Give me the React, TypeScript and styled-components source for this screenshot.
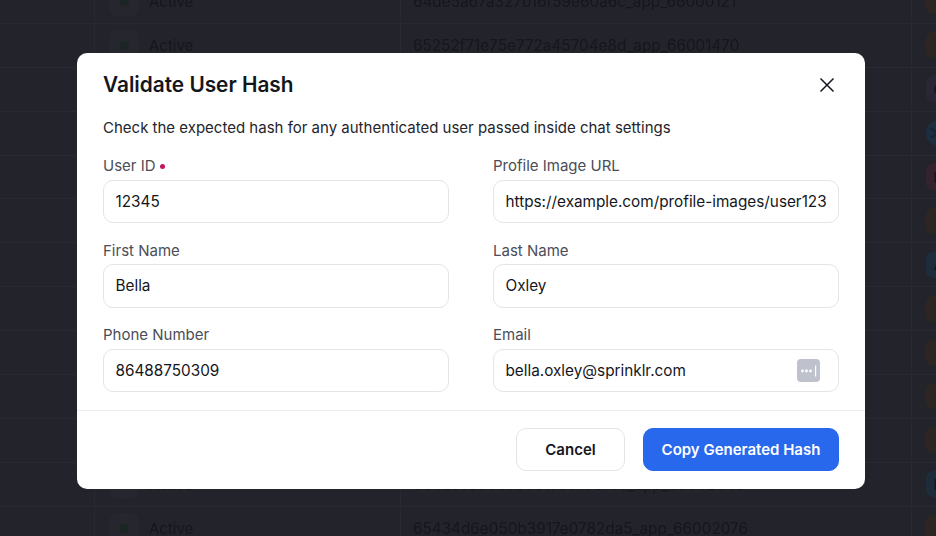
import React from 'react';
import styled, { createGlobalStyle } from 'styled-components';

const GlobalStyle = createGlobalStyle`
  html, body {
    margin: 0;
    padding: 0;
    height: 100%;
    overflow: hidden;
    background: #22232b;
  }
  * {
    box-sizing: border-box;
  }
`;

const Page = styled.div`
  position: relative;
  width: 936px;
  height: 536px;
  overflow: hidden;
  background: #22232b;
  font-family: Inter, 'Liberation Sans', sans-serif;
`;

const Table = styled.div`
  display: flex;
  flex-direction: column;
  margin-top: -20px;
  filter: blur(0.35px);
`;

const Row = styled.div`
  display: grid;
  grid-template-columns: 94px 306px 511px 25px;
  height: 43.9px;
  border-bottom: 1px solid #282931;
`;

const Cell = styled.div`
  display: flex;
  align-items: center;
  gap: 10px;
  padding-left: 14px;
  border-left: 1px solid #282931;
  font-size: 15px;
  color: #16171d;
  white-space: nowrap;
  overflow: hidden;

  &:first-child {
    border-left: none;
  }
`;

const IdCell = styled(Cell)`
  padding-left: 12px;
  font-size: 15.3px;
`;

const StatusChip = styled.span`
  display: flex;
  align-items: center;
  justify-content: center;
  width: 30px;
  height: 30px;
  border-radius: 8px;
  background: #25262e;
`;

const StatusDot = styled.span`
  width: 9px;
  height: 9px;
  border-radius: 50%;
  background: #1b2524;
`;

const AppIcon = styled.span<{ $tone: string; $round?: boolean }>`
  display: flex;
  align-items: center;
  justify-content: center;
  flex: none;
  width: 26px;
  height: 26px;
  overflow: hidden;
  border-radius: ${(p) => (p.$round ? '50%' : '7px')};
  font-size: 15px;
  font-weight: 700;
  color: #17181f;
  background: ${(p) => p.$tone};
`;

const Overlay = styled.div`
  position: absolute;
  left: 77px;
  top: 53px;
  width: 788px;
  height: 436px;
`;

const Modal = styled.section`
  display: flex;
  flex-direction: column;
  width: 100%;
  height: 100%;
  border-radius: 10px;
  background: #fff;
`;

const Header = styled.header`
  display: flex;
  align-items: center;
  justify-content: space-between;
  height: 44px;
  padding: 20px 28px 0 26px;
`;

const Title = styled.h2`
  margin: 0;
  font-size: 20.8px;
  line-height: 24px;
  font-weight: 600;
  color: #15161c;
`;

const CloseButton = styled.button`
  display: flex;
  padding: 0;
  border: none;
  background: none;
  color: #15161c;
`;

const Subtitle = styled.p`
  margin: 22px 26px 0;
  font-size: 15px;
  line-height: 18px;
  color: #24252c;
`;

const Form = styled.div`
  display: grid;
  grid-template-columns: 346px 346px;
  grid-template-rows: repeat(3, 66px);
  column-gap: 44px;
  row-gap: 18.5px;
  padding: 20px 26px 0;
`;

const Field = styled.div`
  display: flex;
  flex-direction: column;
  gap: 4.8px;
`;

const Label = styled.label`
  display: flex;
  align-items: center;
  gap: 4px;
  height: 18px;
  font-size: 15px;
  line-height: 18px;
  color: #4b4d57;
`;

const Required = styled.span`
  width: 5px;
  height: 5px;
  border-radius: 50%;
  background: #c2185b;
`;

const InputBox = styled.div`
  display: flex;
  flex: 1;
  align-items: center;
  justify-content: space-between;
  padding: 1px 8px 0 11.5px;
  border: 1px solid #e3e4e8;
  border-radius: 10px;
  background: #fff;
`;

const Value = styled.span`
  overflow: hidden;
  font-size: 15.3px;
  line-height: 20px;
  white-space: nowrap;
  color: #15161c;
`;

const PasswordBadge = styled.span`
  display: flex;
  align-items: center;
  justify-content: center;
  flex: none;
  width: 23px;
  height: 23px;
  margin-right: 10px;
  border-radius: 4px;
  background: #bfc2cc;
`;

const Footer = styled.footer`
  display: flex;
  justify-content: flex-end;
  gap: 18px;
  margin-top: 18px;
  padding: 17px 26px 18px;
  border-top: 1px solid #ebecef;
`;

const Button = styled.button<{ $primary?: boolean }>`
  height: 43px;
  padding: 0;
  width: ${(p) => (p.$primary ? '196px' : '109px')};
  border: 1px solid ${(p) => (p.$primary ? '#2868ec' : '#e3e4e8')};
  border-radius: 10px;
  font-family: inherit;
  font-size: 15px;
  font-weight: 600;
  color: ${(p) => (p.$primary ? '#fff' : '#15161c')};
  background: ${(p) => (p.$primary ? '#2868ec' : '#fff')};
`;

const BROWN = 'linear-gradient(100deg, #2e2620 0%, #2b2522 50%, #1f2029 80%)';
const BLUE = '#1e2d3b';

type TableRow = { id: string; tone: string; round?: boolean; glyph?: string };

const rows: TableRow[] = [
  { id: '64de5a67a327b16f59e60a6c_app_66000121', tone: BROWN },
  { id: '65252f71e75e772a45704e8d_app_66001470', tone: BROWN },
  { id: '652f8e1c75e772a4570c41d2_app_66001512', tone: '#2a2635', glyph: 'C' },
  { id: '6530aa71e75e772a45711c09_app_66001688', tone: '#1c2f41', round: true },
  { id: '6531bc0a75e772a45718fe33_app_66001702', tone: '#34222e', glyph: 'D' },
  { id: '6533d91e050b3917e06ac114_app_66001790', tone: BROWN },
  { id: '653a77ce050b3917e06e52b8_app_66001834', tone: BLUE, glyph: 'A' },
  { id: '653c10de050b3917e0702f67_app_66001901', tone: BROWN },
  { id: '653e44f2050b3917e0719ad0_app_66001955', tone: BROWN },
  { id: '6540b1a7050b3917e073e8c1_app_66001988', tone: BROWN },
  { id: '6541f3d9050b3917e0768b42_app_66002011', tone: BROWN },
  { id: '6542c8ab050b3917e0779f06_app_66002043', tone: BLUE, glyph: 'D' },
  { id: '65434d6e050b3917e0782da5_app_66002076', tone: BROWN },
];

const fields = [
  { label: 'User ID', value: '12345', required: true },
  { label: 'Profile Image URL', value: 'https://example.com/profile-images/user123' },
  { label: 'First Name', value: 'Bella' },
  { label: 'Last Name', value: 'Oxley' },
  { label: 'Phone Number', value: '86488750309' },
  { label: 'Email', value: 'bella.oxley@sprinklr.com', badge: true },
];

function App() {
  return (
    <Page>
      <GlobalStyle />
      <Table>
        {rows.map((row) => (
          <Row key={row.id}>
            <Cell />
            <Cell>
              <StatusChip>
                <StatusDot />
              </StatusChip>
              Active
            </Cell>
            <IdCell>{row.id}</IdCell>
            <Cell>
              <AppIcon $tone={row.tone} $round={row.round}>
                {row.glyph}
                {row.round && (
                  <svg width="26" height="26" viewBox="0 0 26 26" fill="none" stroke="#182532" strokeWidth="2.4" strokeLinecap="round">
                    <path d="M5 9l6 3M6 17l6-3M10 13h6" />
                  </svg>
                )}
              </AppIcon>
            </Cell>
          </Row>
        ))}
      </Table>
      <Overlay>
        <Modal>
          <Header>
            <Title>Validate User Hash</Title>
            <CloseButton aria-label="Close">
              <svg width="20" height="20" viewBox="0 0 20 20" fill="none" stroke="currentColor" strokeWidth="1.5">
                <path d="M3.5 3.5l13 13M16.5 3.5l-13 13" />
              </svg>
            </CloseButton>
          </Header>
          <Subtitle>Check the expected hash for any authenticated user passed inside chat settings</Subtitle>
          <Form>
            {fields.map((field) => (
              <Field key={field.label}>
                <Label>
                  {field.label}
                  {field.required && <Required />}
                </Label>
                <InputBox>
                  <Value>{field.value}</Value>
                  {field.badge && (
                    <PasswordBadge>
                      <svg width="18" height="12" viewBox="0 0 18 12" fill="#fff">
                        <circle cx="2.5" cy="6" r="1.4" />
                        <circle cx="6.5" cy="6" r="1.4" />
                        <circle cx="10.5" cy="6" r="1.4" />
                        <rect x="15" y="0.5" width="1.2" height="11" />
                      </svg>
                    </PasswordBadge>
                  )}
                </InputBox>
              </Field>
            ))}
          </Form>
          <Footer>
            <Button>Cancel</Button>
            <Button $primary>Copy Generated Hash</Button>
          </Footer>
        </Modal>
      </Overlay>
    </Page>
  );
}

export default App;
